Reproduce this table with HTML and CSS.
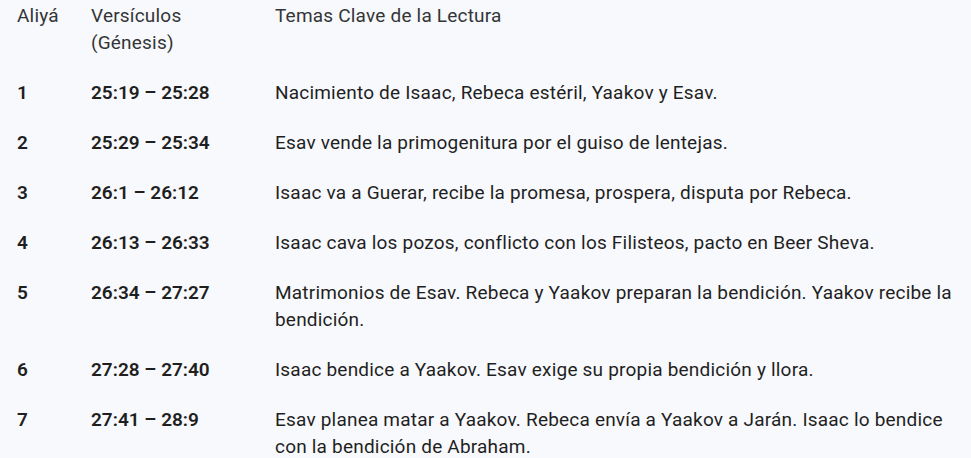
FILE: index.html
```html
<!DOCTYPE html>
<html lang="es">
<head>
<meta charset="utf-8">
<link rel="stylesheet" href="styles.css">
<title>Aliyot</title>
</head>
<body>
<div class="table">
  <div class="row head">
    <div class="cell c1">Aliyá</div>
    <div class="cell c2">Versículos (Génesis)</div>
    <div class="cell c3">Temas Clave de la Lectura</div>
  </div>
  <div class="row">
    <div class="cell c1 b">1</div>
    <div class="cell c2 b">25:19 – 25:28</div>
    <div class="cell c3">Nacimiento de Isaac, Rebeca estéril, Yaakov y Esav.</div>
  </div>
  <div class="row">
    <div class="cell c1 b">2</div>
    <div class="cell c2 b">25:29 – 25:34</div>
    <div class="cell c3">Esav vende la primogenitura por el guiso de lentejas.</div>
  </div>
  <div class="row">
    <div class="cell c1 b">3</div>
    <div class="cell c2 b">26:1 – 26:12</div>
    <div class="cell c3">Isaac va a Guerar, recibe la promesa, prospera, disputa por Rebeca.</div>
  </div>
  <div class="row">
    <div class="cell c1 b">4</div>
    <div class="cell c2 b">26:13 – 26:33</div>
    <div class="cell c3">Isaac cava los pozos, conflicto con los Filisteos, pacto en Beer Sheva.</div>
  </div>
  <div class="row">
    <div class="cell c1 b">5</div>
    <div class="cell c2 b">26:34 – 27:27</div>
    <div class="cell c3">Matrimonios de Esav. Rebeca y Yaakov preparan la bendición. Yaakov recibe la bendición.</div>
  </div>
  <div class="row">
    <div class="cell c1 b">6</div>
    <div class="cell c2 b">27:28 – 27:40</div>
    <div class="cell c3">Isaac bendice a Yaakov. Esav exige su propia bendición y llora.</div>
  </div>
  <div class="row">
    <div class="cell c1 b">7</div>
    <div class="cell c2 b">27:41 – 28:9</div>
    <div class="cell c3">Esav planea matar a Yaakov. Rebeca envía a Yaakov a Jarán. Isaac lo bendice con la bendición de Abraham.</div>
  </div>
</div>
</body>
</html>
```
FILE: styles.css
```css
html, body {
  margin: 0;
  padding: 0;
  background: #f8f9fc;
}
body {
  font-family: Roboto, "Noto Sans", sans-serif;
  font-size: 19px;
  line-height: 27px;
  color: #1f1f1f;
  overflow: hidden;
}
.table {
  margin-left: 1px;
  display: flex;
  flex-direction: column;
}
.row {
  display: grid;
  grid-template-columns: 74px 184px 1fr;
  padding: 11.5px 0;
  letter-spacing: 0.2px;
}
.row.head {
  padding-top: 1.5px;
  color: #333537;
}
.cell {
  padding: 0 16px;
}
.b {
  font-weight: 600;
  letter-spacing: 0;
}
```
